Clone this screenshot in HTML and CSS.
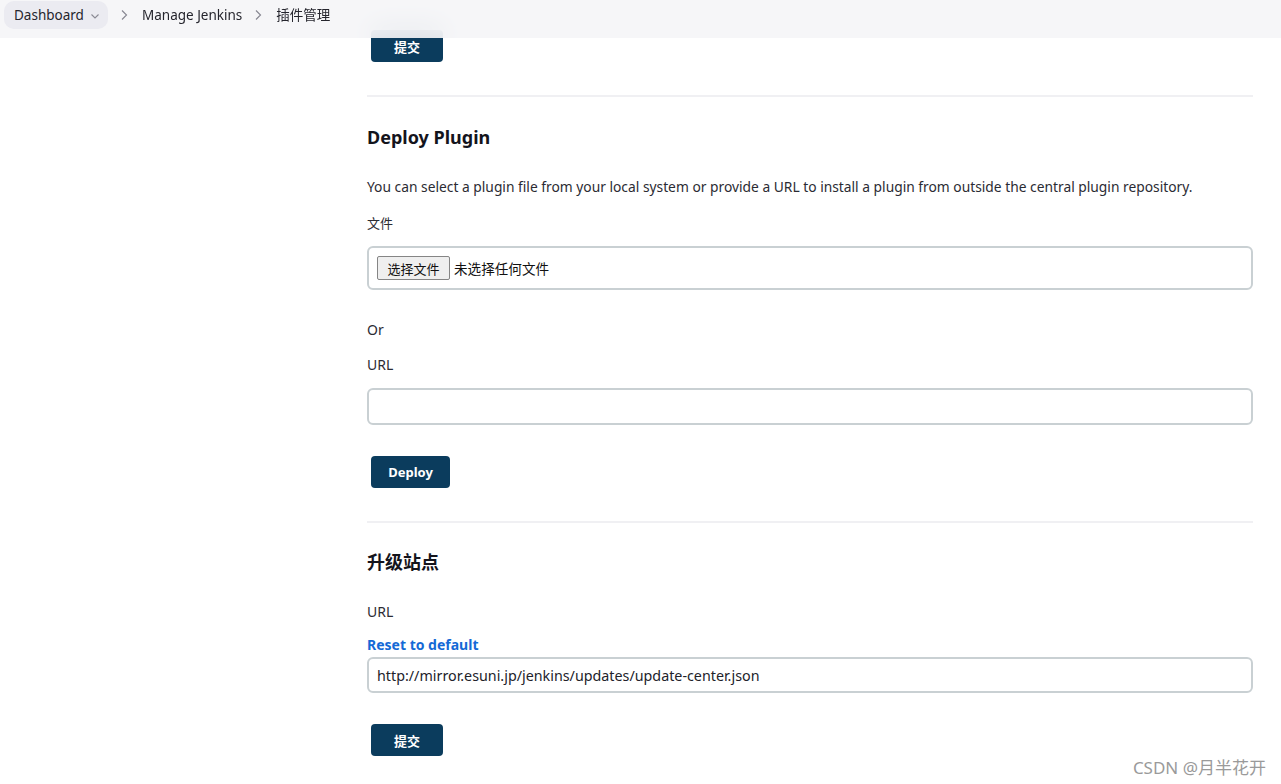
FILE: index.html
```html
<!DOCTYPE html>
<html lang="zh">
<head>
<meta charset="utf-8">
<title>插件管理</title>
<link rel="stylesheet" href="styles.css">
</head>
<body>
<header class="topbar">
  <nav class="crumbs">
    <span class="crumb crumb-pill">Dashboard
      <svg class="chev-down" width="10" height="10" viewBox="0 0 10 10"><path d="M1.5 3.5 L5 7 L8.5 3.5" fill="none" stroke="#8a8a94" stroke-width="1.1"/></svg>
    </span>
    <svg class="sep" width="10" height="12" viewBox="0 0 10 12"><path d="M3 1.5 L7.5 6 L3 10.5" fill="none" stroke="#8a8a94" stroke-width="1.2"/></svg>
    <span class="crumb">Manage Jenkins</span>
    <svg class="sep" width="10" height="12" viewBox="0 0 10 12"><path d="M3 1.5 L7.5 6 L3 10.5" fill="none" stroke="#8a8a94" stroke-width="1.2"/></svg>
    <span class="crumb">插件管理</span>
  </nav>
</header>

<main class="main">
  <section class="sec sec-first">
    <button class="btn btn-submit">提交</button>
  </section>
  <hr class="divider">

  <section class="sec">
    <h2 class="title">Deploy Plugin</h2>
    <p class="desc">You can select a plugin file from your local system or provide a URL to install a plugin from outside the central plugin repository.</p>
    <div class="label label-file">文件</div>
    <div class="field field-file">
      <span class="file-btn">选择文件</span>
      <span class="file-none">未选择任何文件</span>
    </div>
    <div class="label label-or">Or</div>
    <div class="label label-url">URL</div>
    <div class="field field-input"></div>
    <button class="btn btn-deploy">Deploy</button>
  </section>
  <hr class="divider">

  <section class="sec">
    <h2 class="title title-cn">升级站点</h2>
    <div class="label label-url2">URL</div>
    <a class="reset">Reset to default</a>
    <div class="field field-input field-value">http://mirror.esuni.jp/jenkins/updates/update-center.json</div>
    <button class="btn btn-submit btn-last">提交</button>
  </section>
</main>

<div class="watermark">CSDN @月半花开</div>
</body>
</html>
```

FILE: styles.css
```css
* { box-sizing: border-box; }
html, body { margin: 0; padding: 0; background: #fff; }
body {
  font-family: "Noto Sans", "Noto Sans CJK SC", sans-serif;
  font-size: 14px;
  color: #22222a;
  height: 784px;
  overflow: hidden;
}

.topbar {
  position: fixed;
  top: 0; left: 0; right: 0;
  height: 38px;
  background: rgba(245, 245, 247, 0.88);
  backdrop-filter: blur(14px);
  z-index: 10;
  display: flex;
  align-items: flex-start;
  padding: 1px 0 0 4px;
}
.crumbs { display: flex; align-items: center; height: 28px; }
.crumb { font-size: 13.5px; color: #25252d; line-height: 28px; }
.crumb-pill {
  background: #ebebf1;
  border-radius: 10px;
  padding: 0 8px 0 10px;
  display: flex; align-items: center; gap: 6px;
  width: 104px;
}
.chev-down { margin-top: 2px; }
.sep { margin: 0 13px 0 11px; }

.main {
  width: 886px;
  margin-left: 367px;
  padding-top: 30px;
}
.sec { display: flex; flex-direction: column; align-items: flex-start; }
.divider {
  border: 0;
  height: 2px;
  background: #f0f0f3;
  margin: 33px 0 0 0;
  width: 886px;
}

.btn {
  background: #0b3c5d;
  color: #fff;
  border: 0;
  border-radius: 4px;
  height: 32px;
  font-family: "Noto Sans", "Noto Sans CJK SC", sans-serif;
  font-weight: 700;
  font-size: 13px;
  margin-left: 4px;
  cursor: pointer;
}
.btn-submit { width: 72px; }
.btn-deploy { width: 79px; margin-top: 31px; }
.btn-last { margin-top: 31px; }

.title {
  margin: 28px 0 0 0;
  font-size: 18px;
  line-height: 24px;
  font-weight: 700;
  color: #14141c;
}
.title-cn { margin-top: 26px; font-family: "Noto Sans CJK SC", sans-serif; }
.desc { margin: 28px 0 0 0; line-height: 20px; font-size: 13.8px; color: #2b2b33; }
.label { line-height: 20px; color: #2b2b33; font-size: 14px; }
.label-file { margin-top: 16px; font-size: 13px; }
.label-or { margin-top: 30px; }
.label-url { margin-top: 15px; }
.label-url2 { margin-top: 29px; }

.field {
  width: 886px;
  border: 2px solid #c9d0d3;
  border-radius: 6px;
  background: #fff;
}
.field-file {
  height: 44px;
  margin-top: 13px;
  display: flex; align-items: center;
  padding-left: 8px;
  font-size: 13px;
}
.file-btn {
  background: #efefef;
  border: 1px solid #858585;
  border-radius: 2px;
  height: 24px;
  width: 73px;
  display: flex; align-items: center; justify-content: center;
  color: #111;
  margin-right: 4px;
}
.file-none { color: #111; font-size: 13.6px; }
.field-input { height: 37px; margin-top: 13px; }
.field-value {
  margin-top: 2px;
  height: 36px;
  padding-left: 8px;
  display: flex; align-items: center;
  font-size: 14.3px;
  color: #22222a;
}
.reset {
  margin-top: 13px;
  color: #1469d6;
  font-weight: 700;
  font-size: 14px;
  line-height: 20px;
}

.watermark {
  position: absolute;
  right: 15px;
  top: 754px;
  font-size: 17px;
  color: #9a9a9a;
  font-family: "Noto Sans", "Noto Sans CJK SC", sans-serif;
}
```
